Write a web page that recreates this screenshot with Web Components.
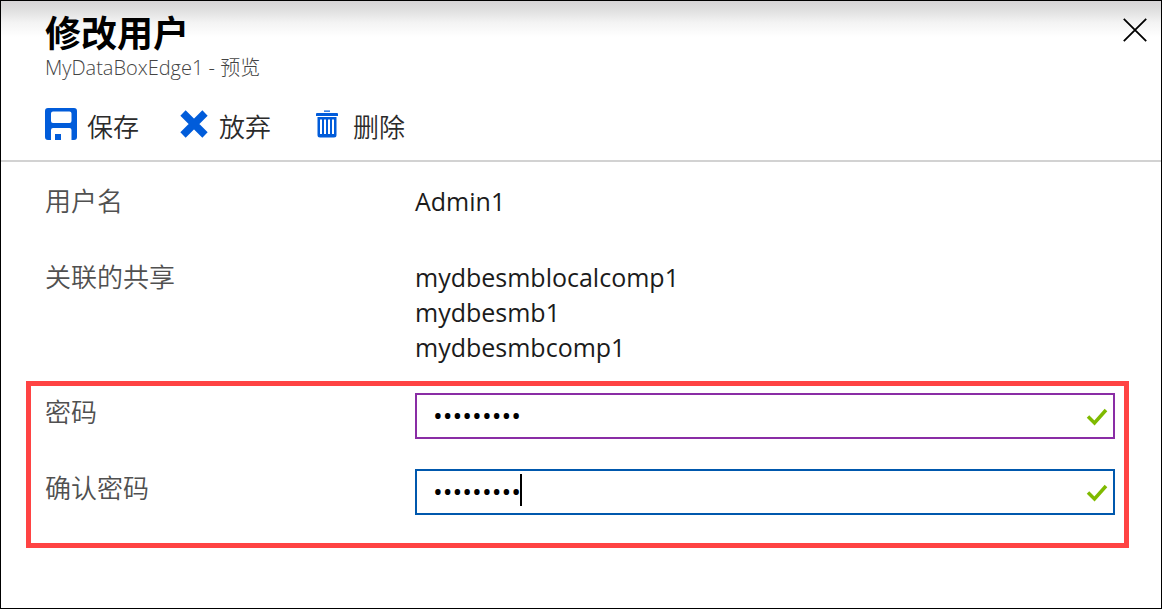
<!DOCTYPE html>
<html lang="zh-CN">
<head>
<meta charset="utf-8">
<title>修改用户</title>
<style>
  html { box-sizing: border-box; }
  body {
    margin: 0;
    background: #fff;
    font-family: "Open Sans", "Noto Sans CJK SC", sans-serif;
    color: #1b1b1b;
  }
</style>
</head>
<body>
<blade-panel>
  <blade-header slot="header" heading="修改用户" subtitle="MyDataBoxEdge1 - 预览"></blade-header>
  <command-bar slot="header">
    <command-button icon="save">保存</command-button>
    <command-button icon="discard">放弃</command-button>
    <command-button icon="delete">删除</command-button>
  </command-bar>
  <info-row label="用户名"><div>Admin1</div></info-row>
  <info-row label="关联的共享">
    <div>mydbesmblocalcomp1</div>
    <div>mydbesmb1</div>
    <div>mydbesmbcomp1</div>
  </info-row>
  <highlight-box slot="fields">
    <password-field label="密码" value="password1" state="edited"></password-field>
    <password-field label="确认密码" value="password1" state="active"></password-field>
  </highlight-box>
</blade-panel>

<script>
  const define = (name, render) => customElements.define(name, class extends HTMLElement {
    connectedCallback() {
      if (this.shadowRoot) return;
      this.attachShadow({ mode: "open" }).innerHTML = render(this);
    }
  });

  define("blade-panel", () => `
    <style>
      :host { display: block; box-sizing: border-box; min-height: 100vh; border: 1px solid #000;
              background: linear-gradient(#d6d4d6, #dedede 8px, #f4f4f4 22px, #fff 36px) no-repeat #fff; }
      header { padding: 13px 0 12px 44px; border-bottom: 2px solid #d2d2d2; }
      .info { display: grid; gap: 41px; padding: 22px 46px 17px 44px; }
      .fields { padding: 0 32px 0 25px; }
    </style>
    <header><slot name="header"></slot></header>
    <main>
      <section class="info"><slot></slot></section>
      <section class="fields"><slot name="fields"></slot></section>
    </main>`);

  define("blade-header", el => `
    <style>
      :host { display: flex; justify-content: space-between; align-items: flex-start; padding-bottom: 24px; }
      h1 { margin: 0; font-size: 36px; line-height: 40px; font-weight: 700; color: #000; }
      p { margin: 0; font-size: 20px; line-height: 28px; font-weight: 300; color: #444; }
      button { margin: 0 11px 0 0; padding: 3px 2px; border: 0; background: none; display: flex; }
      svg { width: 26px; height: 26px; }
    </style>
    <div><h1>${el.getAttribute("heading")}</h1><p>${el.getAttribute("subtitle")}</p></div>
    <button type="button" aria-label="关闭">
      <svg viewBox="0 0 26 26" fill="none" stroke="#000" stroke-width="1.8"><path d="M1.8 1.8 24.2 24.2M24.2 1.8 1.8 24.2"/></svg>
    </button>`);

  define("command-bar", () => `
    <style>:host { display: flex; gap: 40px; }</style>
    <slot></slot>`);

  const icons = {
    save: `<svg width="32" height="32" viewBox="0 0 32 32"><path fill="#015cda" fill-rule="evenodd" d="M3 0H29a3 3 0 0 1 3 3V29a3 3 0 0 1-3 3H26.500V22a2 2 0 0 0-2-2H8a2 2 0 0 0-2 2V32H3a3 3 0 0 1-3-3V3a3 3 0 0 1 3-3ZM8 3.500a2 2 0 0 0-2 2V13a2 2 0 0 0 2 2H24.500a2 2 0 0 0 2-2V5.500a2 2 0 0 0-2-2Z"/><path fill="#015cda" d="M10 26h6v6h-6z"/></svg>`,
    discard: `<svg width="30" height="32" viewBox="0 0 30 32"><path d="M4 5 26 27M26 5 4 27" stroke="#015cda" stroke-width="7.500" fill="none"/></svg>`,
    delete: `<svg width="32" height="32" viewBox="-5 0 32 32"><path fill="#015cda" fill-rule="evenodd" d="M8 2.500h6v1.300H8ZM1 5H21a1 1 0 0 1 1 1V8H0V6A1 1 0 0 1 1 5ZM1.500 9H20.500V27a2.500 2.500 0 0 1-2.500 2.500H4A2.500 2.500 0 0 1 1.500 27ZM4 11.500V26H6V11.500ZM8 11.500V26H10V11.500ZM12 11.500V26H14V11.500ZM16 11.500V26H18V11.500Z"/></svg>`
  };
  define("command-button", el => `
    <style>
      :host { display: block; }
      button { display: flex; align-items: flex-start; gap: 10px; margin: 0; padding: 0; border: 0; background: none;
               font: inherit; font-size: 26px; line-height: 42px; font-weight: 350; color: #2b2b2b; }
      svg { display: block; margin-top: 2px; }
    </style>
    <button type="button">${icons[el.getAttribute("icon")]}<span><slot></slot></span></button>`);

  define("info-row", el => `
    <style>
      :host { display: grid; grid-template-columns: 370px 1fr; font-size: 25px; line-height: 34px; }
      .label { font-size: 26px; line-height: 35px; font-weight: 350; color: #505050; }
      .value { display: grid; gap: 1px; }
    </style>
    <div class="label">${el.getAttribute("label")}</div>
    <div class="value"><slot></slot></div>`);

  define("highlight-box", () => `
    <style>
      :host { display: grid; gap: 30px; border: 5px solid #ff4343; padding: 7px 9px 28px 14px; }
    </style>
    <slot></slot>`);

  define("password-field", el => `
    <style>
      :host { display: grid; grid-template-columns: 370px 1fr; --edge: #8a2da5; }
      :host([state="active"]) { --edge: #0058ad; }
      label { font-size: 26px; line-height: 38px; font-weight: 350; color: #505050; }
      .box { position: relative; }
      input { display: block; box-sizing: border-box; width: 100%; height: 46px; margin: 0; padding: 0 44px 2px 16px;
              border: 2px solid var(--edge); border-radius: 0; outline: 0; background: #fff;
              font-family: "Open Sans", sans-serif; font-size: 26px; color: #000; caret-color: transparent; }
      svg { position: absolute; right: 7px; top: 14px; width: 22px; height: 20px; }
      .caret { display: none; position: absolute; left: 105px; top: 5px; width: 2px; height: 32px; background: #000; }
      :host([state="active"]) .caret { display: block; }
    </style>
    <label for="pw">${el.getAttribute("label")}</label>
    <div class="box">
      <input id="pw" type="password" value="${el.getAttribute("value")}">
      <span class="caret"></span>
      <svg viewBox="0 0 22 20" fill="none" stroke="#7fba00" stroke-width="3.500"><path d="M2 9.500 8.500 16 20 3"/></svg>
    </div>`);
</script>
</body>
</html>
